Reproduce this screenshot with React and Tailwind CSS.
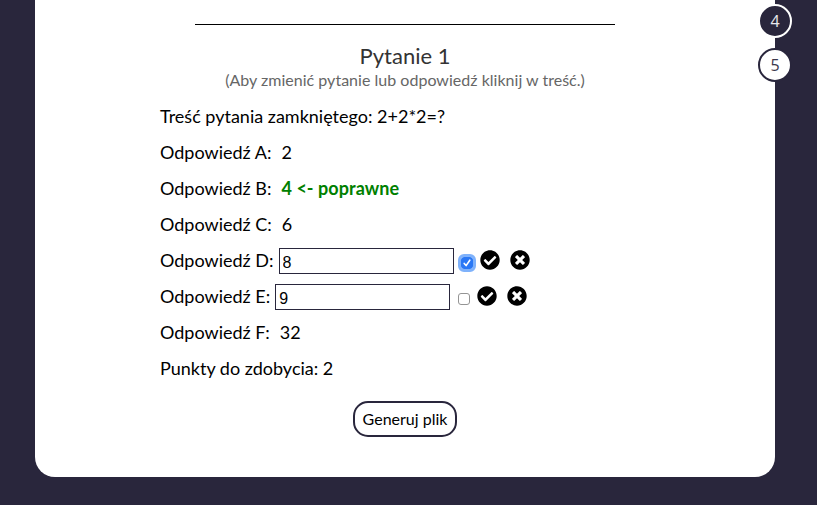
import React from 'react';
import { FaCheckCircle, FaTimesCircle } from 'react-icons/fa';

function Row({ children }) {
  return <div className="flex h-9 items-center whitespace-pre">{children}</div>;
}

function Checkbox({ checked }) {
  return checked ? (
    <span className="mt-1.5 mr-[0.9px] ml-[7px] flex size-3 shrink-0 items-center justify-center rounded-[3px] bg-[#2a78f5] outline-3 outline-[#7fb2fb]">
      <svg viewBox="0 0 12 12" className="size-3">
        <path d="M3.2 6.4 5.1 8.6 8.8 3.2" fill="none" stroke="white" strokeWidth="1.6" strokeLinecap="round" strokeLinejoin="round" />
      </svg>
    </span>
  ) : (
    <span className="mt-1.5 ml-2 size-3 shrink-0 rounded-[3px] border border-[#949494] bg-white" />
  );
}

function EditRow({ label, value, checked }) {
  return (
    <Row>
      <span>{label}</span>
      <input
        defaultValue={value}
        className="mt-0.5 ml-[5px] h-[26px] w-[175px] shrink-0 border border-[#29263c] px-[3px] pt-[3px] font-['Liberation_Sans',sans-serif] text-base"
      />
      <Checkbox checked={checked} />
      <FaCheckCircle className="mb-px ml-[7px] size-5 shrink-0" />
      <FaTimesCircle className="mb-px ml-[9.4px] size-5 shrink-0" />
    </Row>
  );
}

export default function App() {
  return (
    <div className="h-[505px] overflow-hidden bg-[#29263c] pl-[35px] font-['Lato',sans-serif] text-lg text-black">
      <main className="relative h-[477px] w-[740px] rounded-b-[20px] bg-white pt-6">
        <hr className="mx-auto w-[420px] border-t border-black" />
        <header className="mt-[17px] text-center">
          <h2 className="h-7 text-[22px] leading-7 text-[#333]">Pytanie 1</h2>
          <p className="h-5 text-base leading-5 tracking-[0.02px] text-[#666]">(Aby zmienić pytanie lub odpowiedź kliknij w treść.)</p>
        </header>
        <section className="mt-2 pl-[125px]">
          <Row>Treść pytania zamkniętego: 2+2*2=?</Row>
          <Row>Odpowiedź A:<span className="ml-2.5">2</span></Row>
          <Row>
            Odpowiedź B:<b className="ml-2.5 tracking-[0.05px] text-[green]">{'4 <- poprawne'}</b>
          </Row>
          <Row>Odpowiedź C:<span className="ml-2.5">6</span></Row>
          <EditRow label="Odpowiedź D:" value="8" checked />
          <EditRow label="Odpowiedź E:" value="9" />
          <Row>Odpowiedź F:<span className="ml-2.5">32</span></Row>
          <Row>Punkty do zdobycia: 2</Row>
        </section>
        <button className="mx-auto mt-[15px] block h-9 w-[104px] rounded-[15px] border-2 border-[#29263c] text-base leading-8">
          Generuj plik
        </button>
        <nav className="absolute top-1 -right-[17px] flex flex-col gap-2.5 font-['Open_Sans',sans-serif] text-base">
          <span className="flex size-[34px] items-center justify-center rounded-full border-2 border-white bg-[#29263c] pb-px text-[#e8e8ec]">4</span>
          <span className="flex size-[34px] items-center justify-center rounded-full border-2 border-[#29263c] bg-white pb-px text-[#3b384c]">5</span>
        </nav>
      </main>
    </div>
  );
}
